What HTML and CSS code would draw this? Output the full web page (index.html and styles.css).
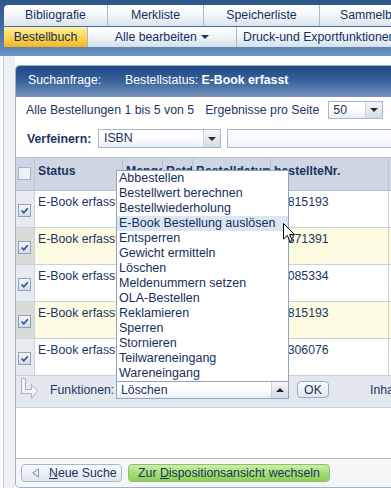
FILE: index.html
```html
<!DOCTYPE html>
<html lang="de">
<head>
<meta charset="utf-8">
<title>Bestellbuch</title>
<link rel="stylesheet" href="styles.css">
</head>
<body>
<div class="top">
  <div class="tabs r1">
    <div class="tab w1">Bibliografie</div>
    <div class="tab w2">Merkliste</div>
    <div class="tab w3">Speicherliste</div>
    <div class="tab w4">Sammelbestellung</div>
  </div>
  <div class="tabs r2">
    <div class="tab act v1">Bestellbuch</div>
    <div class="tab v2">Alle bearbeiten <span class="caret"></span></div>
    <div class="tab v3">Druck-und Exportfunktionen</div>
  </div>
</div>
<div class="page">
  <div class="panel">
    <div class="ph"><span class="q">Suchanfrage:</span><span>Bestellstatus: <b>E-Book erfasst</b></span></div>
    <div class="resline">
      <span class="count">Alle Bestellungen 1 bis 5 von 5</span>
      <span class="erg">Ergebnisse pro Seite</span>
      <div class="sel s50"><span>50</span><i class="btn"><b class="down"></b></i></div>
    </div>
    <div class="filter">
      <span class="flabel">Verfeinern:</span>
      <div class="sel isbn"><span>ISBN</span><i class="btn"><b class="down"></b></i></div>
      <div class="inp"></div>
    </div>
    <div class="grid thead">
      <div class="c ck"><span class="box"></span></div>
      <div class="c">Status</div>
      <div class="c">Menge</div>
      <div class="c">Rstd.</div>
      <div class="c">Bestelldatum</div>
      <div class="c">bestellteNr.</div>
      <div class="c"></div>
    </div>
    <div class="grid row">
      <div class="c ck"><span class="box on"><svg viewBox="0 0 11 11" width="11" height="11"><polyline points="2.5,5.5 4.8,7.8 8.8,3.2"/></svg></span></div>
      <div class="c">E-Book erfasst</div><div class="c">1</div><div class="c"></div><div class="c">12.03.2012</div><div class="c">36815193</div><div class="c"></div>
    </div>
    <div class="grid row alt">
      <div class="c ck"><span class="box on"><svg viewBox="0 0 11 11" width="11" height="11"><polyline points="2.5,5.5 4.8,7.8 8.8,3.2"/></svg></span></div>
      <div class="c">E-Book erfasst</div><div class="c">1</div><div class="c"></div><div class="c">12.03.2012</div><div class="c">36371391</div><div class="c"></div>
    </div>
    <div class="grid row">
      <div class="c ck"><span class="box on"><svg viewBox="0 0 11 11" width="11" height="11"><polyline points="2.5,5.5 4.8,7.8 8.8,3.2"/></svg></span></div>
      <div class="c">E-Book erfasst</div><div class="c">1</div><div class="c"></div><div class="c">13.03.2012</div><div class="c">36085334</div><div class="c"></div>
    </div>
    <div class="grid row alt">
      <div class="c ck"><span class="box on"><svg viewBox="0 0 11 11" width="11" height="11"><polyline points="2.5,5.5 4.8,7.8 8.8,3.2"/></svg></span></div>
      <div class="c">E-Book erfasst</div><div class="c">1</div><div class="c"></div><div class="c">13.03.2012</div><div class="c">36815193</div><div class="c"></div>
    </div>
    <div class="grid row">
      <div class="c ck"><span class="box on"><svg viewBox="0 0 11 11" width="11" height="11"><polyline points="2.5,5.5 4.8,7.8 8.8,3.2"/></svg></span></div>
      <div class="c">E-Book erfasst</div><div class="c">1</div><div class="c"></div><div class="c">14.03.2012</div><div class="c">36306076</div><div class="c"></div>
    </div>
    <div class="tfoot">
      <div class="arr"><svg viewBox="0 0 20 22" width="20" height="22"><path d="M2.5 0.5 V15.5 H12.5 V20.5 L18.5 13 L12.5 6.5 V11.5 H6.5 V0.5 Z"/></svg></div>
      <span class="flab">Funktionen:</span>
      <div class="fsel">
        <div class="sel fs"><span>Löschen</span><i class="btn"><b class="up"></b></i></div>
        <ul class="list">
          <li>Abbestellen</li>
          <li>Bestellwert berechnen</li>
          <li>Bestellwiederholung</li>
          <li class="hi">E-Book Bestellung auslösen</li>
          <li>Entsperren</li>
          <li>Gewicht ermitteln</li>
          <li>Löschen</li>
          <li>Meldenummern setzen</li>
          <li>OLA-Bestellen</li>
          <li>Reklamieren</li>
          <li>Sperren</li>
          <li>Stornieren</li>
          <li>Teilwareneingang</li>
          <li>Wareneingang</li>
          <li class="cursor"><svg viewBox="0 0 13 20" width="13" height="20"><path d="M0.5 0.5 L0.5 16 L4.3 12.4 L7 18.6 L9.3 17.6 L6.7 11.6 L11.6 11.6 Z"/></svg></li>
        </ul>
      </div>
      <button class="ok">OK</button>
      <span class="inh">Inhalt anzeigen</span>
    </div>
    <div class="spacer"></div>
    <div class="bottom">
      <button class="b back"><span class="tri"></span><u>N</u>eue Suche</button>
      <button class="b go">Zur <u>D</u>ispositionsansicht wechseln</button>
    </div>
  </div>
</div>
</body>
</html>
```
FILE: styles.css
```css
* { box-sizing: border-box; }
html, body { margin: 0; padding: 0; }
body {
  width: 391px;
  height: 488px;
  overflow: hidden;
  background: #f3f4f6;
  font-family: "Liberation Sans", Arial, sans-serif;
  font-size: 12.3px;
  color: #1c3663;
}

/* top navigation */
.top {
  height: 56px;
  padding: 5px 0 0 4px;
  background: linear-gradient(#2b5688 0, #3d6b9f 25px, #5e8abb 50px, #7199c5 56px);
}
.tabs { display: flex; white-space: nowrap; }
.r1 { height: 21px; }
.r2 { height: 20px; margin-top: 1px; }
.tab {
  flex: none;
  text-align: center;
  line-height: 21px;
  color: #13305e;
  background: linear-gradient(#ffffff, #f4f7fa 50%, #dbe3ed);
  border-right: 1px solid #a9b9cc;
}
.r2 .tab { line-height: 20px; background: linear-gradient(#ffffff, #f1f4f8 50%, #d6dfea); }
.r1 .tab:first-child { border-top-left-radius: 4px; }
.w1 { width: 104px; }
.w2 { width: 96px; }
.w3 { width: 116px; }
.w4 { width: 120px; text-align: left; padding-left: 20px; }
.v1 { width: 84px; }
.v2 { width: 149px; }
.v3 { width: 200px; text-align: left; padding-left: 6px; }
.r2 .tab.act { background: linear-gradient(#fff0a6, #ffd957 45%, #f5b322); }
.caret {
  display: inline-block;
  width: 0; height: 0;
  border-left: 4px solid transparent;
  border-right: 4px solid transparent;
  border-top: 4px solid #13305e;
  vertical-align: 2px;
  margin-left: 1px;
}

/* page */
.page {
  padding: 9px 0 0 15px;
  background: linear-gradient(to right, #fbfcfd 0 3px, #c6ccd4 3px 4px, #eef0f3 4px 15px, #fff 15px);
}
.panel {
  width: 430px;
  background: #fff;
  border: 1px solid #9eb0c5;
  border-right: none;
  border-radius: 5px 0 0 5px;
  overflow: hidden;
}
.ph {
  height: 31px;
  display: flex;
  align-items: center;
  padding: 0 0 3px 12px;
  color: #fff;
  background: linear-gradient(#1e4883, #35609a 45%, #7593bd);
}
.ph .q { width: 97px; }

.resline {
  display: flex;
  align-items: center;
  height: 18px;
  margin-top: 4px;
  padding-left: 10px;
  white-space: nowrap;
}
.erg { margin-left: 11px; }
.sel {
  position: relative;
  flex: none;
  height: 18px;
  border: 1px solid #a8b8ca;
  background: linear-gradient(#ffffff, #ffffff 40%, #eaeff5);
  padding-left: 4px;
  line-height: 16px;
  color: #1a335f;
}
.sel .btn {
  position: absolute;
  right: 0; top: 0; bottom: 0;
  width: 17px;
  border-left: 1px solid #c9d3de;
  background: linear-gradient(#f3f6f9, #d5dce5);
  display: flex;
  align-items: center;
  justify-content: center;
}
.down, .up { display: block; width: 0; height: 0; border-left: 4px solid transparent; border-right: 4px solid transparent; }
.down { border-top: 4px solid #2a2a2a; }
.up { border-bottom: 4px solid #2a2a2a; }
.s50 { width: 55px; margin-left: 9px; }

.filter {
  display: flex;
  align-items: center;
  height: 19px;
  margin-top: 10px;
  padding-left: 11px;
}
.flabel { flex: none; width: 71px; font-weight: bold; }
.isbn { width: 123px; height: 19px; padding-left: 5px; line-height: 17px; }
.inp {
  flex: none;
  width: 200px;
  height: 19px;
  margin-left: 6px;
  border: 1px solid #a8b8ca;
  background: linear-gradient(#ffffff, #f0f3f7);
}

/* table */
.grid {
  display: grid;
  grid-template-columns: 19px 88px 40px 30px 78px 118px 60px;
}
.thead {
  margin-top: 9px;
  height: 34px;
  border-top: 1px solid #b3c1d1;
  border-bottom: 1px solid #b3c1d1;
  background: #cdd6e2;
  font-weight: bold;
  color: #1b3562;
}
.c {
  padding: 6px 3px 0;
  line-height: 15px;
  white-space: nowrap;
  overflow: hidden;
  border-right: 1px solid #b8c5d4;
}
.row .c { padding-top: 4px; border-right: none; }
.row .c:nth-child(1), .row .c:nth-child(6) { border-right: 1px solid #c8d1dc; }
.row {
  height: 37px;
  border-bottom: 1px solid #c9d2dc;
  background: #fff;
}
.row.alt { background: #fdfbe2; }
.c.ck { padding: 9px 0 0 2px; }
.row .c.ck { padding-top: 13px; background: #e6ebf2; }
.row.alt .c.ck { background: #d9ddd9; }
.box {
  display: block;
  width: 13px; height: 13px;
  border: 1px solid #a4b4c7;
  background: #edf1f6;
}
.box.on {
  border-color: #8ea2ba;
  background: linear-gradient(#f4f7fa, #d2dbe6);
}
.box svg { display: block; margin: 0; }
.box polyline { fill: none; stroke: #34548a; stroke-width: 1.7; }

.tfoot {
  height: 32px;
  display: flex;
  align-items: flex-start;
  padding-top: 5px;
  background: #e3e8ee;
  border-bottom: 1px solid #c9d2dc;
  white-space: nowrap;
}
.tfoot > * { flex: none; }
.arr { width: 34px; padding-left: 3px; margin-top: -3px; }
.arr svg { display: block; }
.arr path { fill: #f2f5f8; stroke: #a7b3c1; stroke-width: 1; }
.flab { width: 66px; line-height: 18px; }
.fsel { position: relative; width: 173px; }
.fs { width: 173px; border-color: #8fa5be; }
.list {
  position: absolute;
  left: 0;
  bottom: 100%;
  width: 173px;
  margin: 0;
  padding: 0;
  list-style: none;
  background: #fff;
  border: 1px solid #8fa5be;
  border-bottom: none;
  font-size: 12.5px;
  color: #142f5c;
}
.list li { height: 15px; line-height: 15px; padding-left: 2px; white-space: nowrap; }
.list li.hi { background: #dce6f2; }
.list li.cursor {
  position: absolute;
  left: 166px;
  top: 52px;
  height: auto;
  padding: 0;
}
.cursor svg { display: block; }
.cursor path { fill: #fff; stroke: #000; stroke-width: 1; }
.ok {
  margin-left: 8px;
  width: 32px;
  height: 17px;
  padding: 0;
  font: inherit;
  color: #1a335f;
  border: 1px solid #9aabc0;
  border-radius: 4px;
  background: linear-gradient(#fbfcfd, #dfe6ee);
}
.inh { margin-left: 41px; line-height: 18px; }

.spacer { height: 50px; }
.bottom {
  height: 29px;
  border-top: 1px solid #aebbca;
  background: #f4f6f8;
  padding: 5px 0 0 5px;
  display: flex;
  gap: 6px;
  align-items: flex-start;
}
.b {
  flex: none;
  height: 18px;
  padding: 0 8px;
  font: inherit;
  color: #1a335f;
  border-radius: 4px;
  line-height: 16px;
  white-space: nowrap;
}
.b u { text-decoration: underline; }
.back {
  width: 101px;
  display: flex;
  align-items: center;
  padding-left: 10px;
  border: 1px solid #a8b8cc;
  background: linear-gradient(#f9fbfd, #dde5ef);
}
.tri {
  display: inline-block;
  position: relative;
  width: 0; height: 0;
  border-top: 5px solid transparent;
  border-bottom: 5px solid transparent;
  border-right: 7px solid #8ea1b8;
  margin-right: 10px;
}
.tri::after {
  content: "";
  position: absolute;
  left: 2px; top: -3px;
  border-top: 3px solid transparent;
  border-bottom: 3px solid transparent;
  border-right: 4px solid #eef2f7;
}
.go {
  width: 202px;
  border: 1px solid #8fbf6c;
  background: linear-gradient(#cdeeab, #a6de76 50%, #8ccf58);
}
```
